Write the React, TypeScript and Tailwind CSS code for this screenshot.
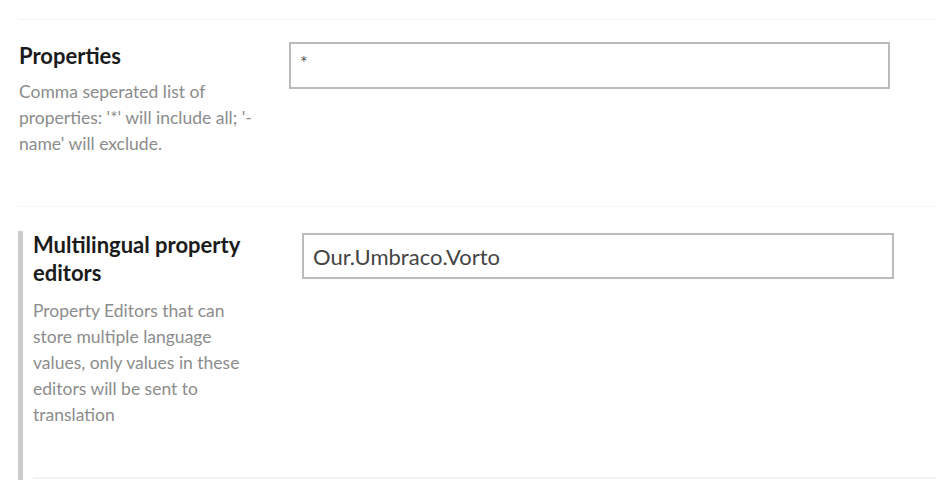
import React from 'react';

const font = { fontFamily: 'Lato, "Open Sans", sans-serif' };

const App: React.FC = () => {
  return (
    <div className="w-[936px] h-[490px] bg-white overflow-hidden" style={font}>
      <div className="pt-[19px] pl-[18px]">
        {/* Properties */}
        <section className="border-t border-[#f4f4f5] pt-[22px] pb-[49px]">
          <div className="flex">
            <div className="w-[271px] shrink-0 pl-px pr-[20px]">
              <h3 className="text-[22px] leading-[28px] font-bold text-[#1b1b1b]">Properties</h3>
              <p className="mt-[9px] text-[17.5px] leading-[26px] text-[#8c8c8c]">
                Comma seperated list of properties: '*' will include all; '-name' will exclude.
              </p>
            </div>
            <div className="w-[601px] h-[47px] border-2 border-[#bbbabf] pl-[9px] pt-[9px] text-[18px] leading-[18px] text-[#555]">
              *
            </div>
          </div>
        </section>

        {/* Multilingual property editors */}
        <section className="border-t border-[#f4f4f5] pt-[24px]">
          <div className="border-l-[5px] border-[#cccccc] pl-[10px] h-[249px]">
            <div className="flex border-b-2 border-[#f3f3f3] h-[248px]">
              <div className="w-[269px] shrink-0 pr-[42px]">
                <h3 className="text-[22px] leading-[28px] font-bold text-[#1b1b1b]">
                  Multilingual property editors
                </h3>
                <p className="mt-[11px] text-[17.5px] leading-[26px] text-[#8c8c8c]">
                  Property Editors that can store multiple language values, only values in these editors will be sent to translation
                </p>
              </div>
              <div className="mt-[2px] w-[592px] h-[46px] border-2 border-[#bbbabf] pl-[9px] flex items-center text-[22px] text-[#444]">
                Our.Umbraco.Vorto
              </div>
            </div>
          </div>
        </section>
      </div>
    </div>
  );
};

export default App;
